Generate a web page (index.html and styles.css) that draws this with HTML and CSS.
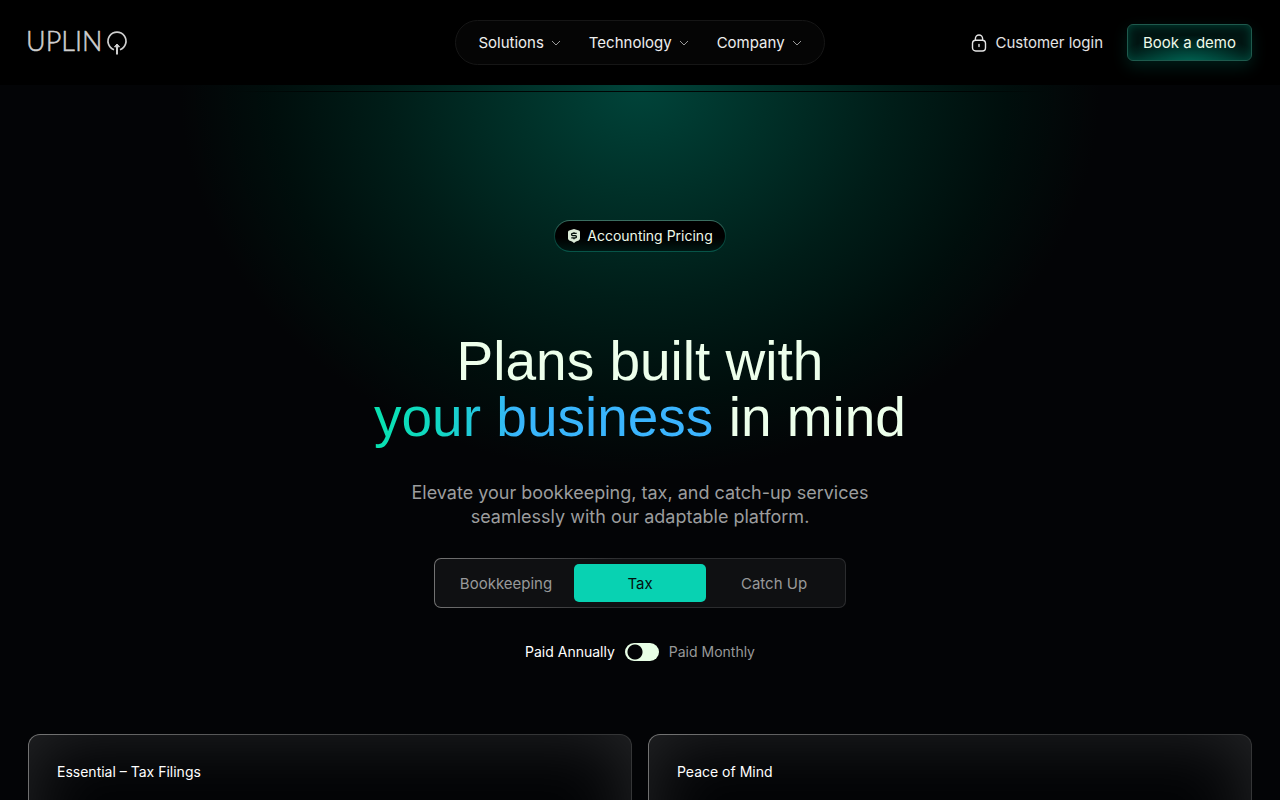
FILE: index.html
```html
<!DOCTYPE html>
<html lang="en">
<head>
<meta charset="utf-8">
<meta name="viewport" content="width=device-width, initial-scale=1">
<title>Uplinq – Accounting Pricing</title>
<link rel="stylesheet" href="styles.css">
</head>
<body>
<header class="header">
  <a class="logo" href="#" aria-label="Uplinq home">
    <svg width="100" height="24" viewBox="0 0 100 24" fill="none" stroke="currentColor" stroke-width="1.7" aria-hidden="true">
      <text class="logo-text" x="-2" y="20">UPLIN</text>
      <path d="M86 18.700A9 9 0 1 1 92 18.700"/>
      <path d="M89 23.500V14" stroke-width="2"/>
      <path d="M86.500 15.800 89 13l2.500 2.800z" fill="currentColor" stroke-width="1"/>
    </svg>
  </a>
  <nav class="nav">
    <button class="nav-item" type="button">Solutions
      <svg class="chevron" width="10" height="6" viewBox="0 0 10 6" fill="none" stroke="currentColor" aria-hidden="true"><path d="M1 1l4 4 4-4"/></svg>
    </button>
    <button class="nav-item" type="button">Technology
      <svg class="chevron" width="10" height="6" viewBox="0 0 10 6" fill="none" stroke="currentColor" aria-hidden="true"><path d="M1 1l4 4 4-4"/></svg>
    </button>
    <button class="nav-item" type="button">Company
      <svg class="chevron" width="10" height="6" viewBox="0 0 10 6" fill="none" stroke="currentColor" aria-hidden="true"><path d="M1 1l4 4 4-4"/></svg>
    </button>
  </nav>
  <div class="actions">
    <a class="login" href="#">
      <svg width="16" height="18" viewBox="0 0 16 18" fill="none" stroke="currentColor" stroke-width="1.4" stroke-linecap="round" aria-hidden="true">
        <rect x="1.500" y="6.200" width="13" height="10.800" rx="3.200"/>
        <path d="M4.400 6V4.600a3.600 3.600 0 0 1 7.200 0V6"/>
        <path d="M8 10.400v2.200"/>
      </svg>
      Customer login
    </a>
    <a class="demo" href="#">Book a demo</a>
  </div>
</header>
<main class="main">
  <section class="hero">
    <div class="badge">
      <svg width="12" height="14" viewBox="0 0 12 14" aria-hidden="true">
        <path d="M6 0 10.8 1.6Q12 2 12 3.2V9.6Q12 10.8 10.8 11.4L8 12.6 6 14 4 12.6 1.2 11.4Q0 10.800 0 9.600V3.200Q0 2 1.200 1.600Z" fill="#dcebd8"/>
        <path d="M8.700 4.400H4.600Q3.600 4.400 3.600 5.500T4.600 6.600H7.400Q8.400 6.600 8.400 7.700T7.400 8.900H3.300M6 3.200V4.400M6 8.900V10.200" fill="none" stroke="#04100c" stroke-width="1.400"/>
      </svg>
      Accounting Pricing
    </div>
    <h1 class="title">Plans built with<br><span class="accent">your business</span> in mind</h1>
    <p class="lead">Elevate your bookkeeping, tax, and catch-up services seamlessly with our adaptable platform.</p>
    <div class="tabs" role="tablist">
      <button class="tab" type="button" role="tab" aria-selected="false">Bookkeeping</button>
      <button class="tab active" type="button" role="tab" aria-selected="true">Tax</button>
      <button class="tab" type="button" role="tab" aria-selected="false">Catch Up</button>
    </div>
    <div class="billing">
      <label class="billing-on" for="billing">Paid Annually</label>
      <input class="switch" id="billing" type="checkbox" role="switch">
      <label class="billing-off" for="billing">Paid Monthly</label>
    </div>
  </section>
  <section class="plans">
    <article class="plan"><h2 class="plan-name">Essential – Tax Filings</h2></article>
    <article class="plan"><h2 class="plan-name">Peace of Mind</h2></article>
  </section>
</main>
</body>
</html>
```
FILE: styles.css
```css
* { box-sizing: border-box; }

body {
  margin: 0;
  min-height: 100vh;
  background: #030406;
  color: #fff;
  font-family: Inter, "Liberation Sans", sans-serif;
  font-size: 15px;
}

a { color: inherit; text-decoration: none; }

button {
  margin: 0;
  border: 0;
  background: none;
  color: inherit;
  font: inherit;
  cursor: pointer;
}

.header {
  position: sticky;
  top: 0;
  z-index: 2;
  display: grid;
  grid-template-columns: 1fr auto 1fr;
  align-items: center;
  padding: 20px 28px;
  background: #000;
}

.logo {
  display: flex;
  color: #cfcfcf;
}

.logo svg { overflow: visible; }

.logo-text {
  fill: currentColor;
  stroke-width: 0.5px;
  font-family: Lato, sans-serif;
  font-size: 27px;
  font-weight: 300;
}

.nav {
  display: flex;
  gap: 28px;
  padding: 0 22px;
  border: 1px solid #161616;
  border-radius: 23px;
  background: #050505;
}

.nav-item {
  display: flex;
  align-items: center;
  gap: 7px;
  height: 43px;
  padding: 0;
  color: #eee;
}

.chevron { color: #999; }

.actions {
  display: flex;
  align-items: center;
  justify-content: flex-end;
  gap: 24px;
}

.login {
  display: flex;
  align-items: center;
  gap: 8px;
  color: #e4e4e4;
}

.demo {
  padding: 0 15px;
  border: 1px solid #1f5a4d;
  border-radius: 6px;
  background: radial-gradient(ellipse 60% 80% at 50% 110%, #006152, transparent), #001512;
  box-shadow: inset 0 0 10px rgba(0, 100, 82, .6), 0 6px 16px rgba(0, 100, 82, .3);
  color: #effbea;
  line-height: 35px;
}

.hero {
  display: flex;
  flex-direction: column;
  align-items: center;
  padding: 135px 28px 72px;
  background:
    linear-gradient(90deg, transparent 18%, #000403 24%, #000403 76%, transparent 82%) 0 6px / 100% 1px no-repeat,
    radial-gradient(ellipse 460px 390px at 50% 0, #00443a 0, #003028 28%, #001d18 55%, #000e0c 80%, transparent 100%);
}

.badge {
  display: flex;
  align-items: center;
  gap: 7px;
  height: 32px;
  padding: 0 12px 1px 13px;
  border: 1px solid transparent;
  border-radius: 16px;
  background:
    linear-gradient(#000 55%, #001713) padding-box,
    linear-gradient(#3c6f62, #073e35 50%, #075549) border-box;
  color: #edf9e9;
  font-size: 14px;
}

.title {
  margin: 81px 0 36px;
  color: #edffeb;
  font-family: "Liberation Sans", Arial, sans-serif;
  font-size: 55px;
  font-weight: 400;
  line-height: 56px;
  text-align: center;
}

.accent {
  background: linear-gradient(90deg, #08e2b0, #12d6c4 20%, #38b6fb 42%, #3cb4ff);
  background-clip: text;
  -webkit-background-clip: text;
  color: transparent;
}

.lead {
  max-width: 500px;
  margin: 0;
  color: #9c9d9e;
  font-size: 18px;
  line-height: 24px;
  text-align: center;
}

.tabs {
  display: grid;
  grid-template-columns: repeat(3, 1fr);
  gap: 2px;
  width: 100%;
  max-width: 412px;
  margin: 29px 0 34px;
  padding: 5px;
  border: 1px solid transparent;
  border-radius: 7px;
  background:
    linear-gradient(#0f1012, #0f1012) padding-box,
    linear-gradient(100deg, #747474, #2b2c2e 45%, #2b2c2e) border-box;
}

.tab {
  height: 38px;
  padding: 0;
  border-radius: 5px;
  color: #98999a;
}

.tab.active { background: #08d2b2; color: #03100e; }

.billing {
  display: flex;
  align-items: center;
  gap: 10px;
  font-size: 14px;
  line-height: 20px;
}

.billing-off { color: #98999a; }

.switch {
  appearance: none;
  width: 34px;
  height: 18px;
  margin: 0;
  border-radius: 9px;
  background: radial-gradient(circle at 10px 50%, #030406 7px, transparent 8px), #e8ffe6;
  cursor: pointer;
}

.switch:checked { background: radial-gradient(circle at 24px 50%, #030406 7px, transparent 8px), #e8ffe6; }

.plans {
  display: grid;
  grid-template-columns: 1fr 1fr;
  gap: 16px;
  padding: 0 28px 28px;
}

.plan {
  min-height: 400px;
  padding: 27px 28px;
  border: 1px solid transparent;
  border-radius: 12px;
  background:
    linear-gradient(#030406, #030406) padding-box,
    linear-gradient(120deg, #747474, #343536 50%, #343536) border-box;
  box-shadow: inset 0 0 72px rgba(255, 255, 255, .14);
}

.plan-name {
  margin: 0;
  font-size: 14px;
  font-weight: 400;
  line-height: 20px;
}
```
